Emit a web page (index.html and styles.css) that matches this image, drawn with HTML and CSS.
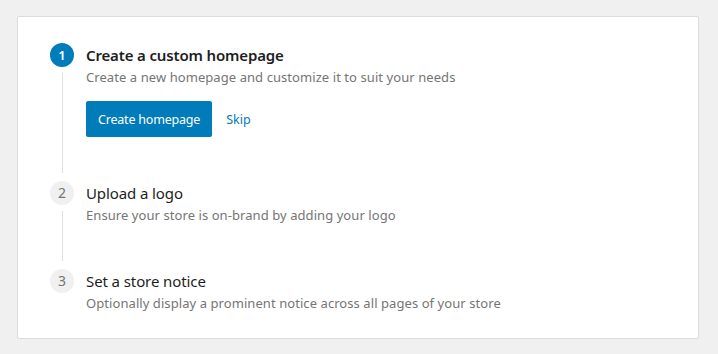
FILE: index.html
```html
<!DOCTYPE html>
<html lang="en">
<head>
  <meta charset="UTF-8">
  <meta name="viewport" content="width=device-width, initial-scale=1.0">
  <title>Store setup</title>
  <link rel="stylesheet" href="styles.css">
</head>
<body>
  <div class="card">
    <div class="step active">
      <div class="marker">
        <span class="num">1</span>
        <span class="line"></span>
      </div>
      <div class="content">
        <h3 class="title">Create a custom homepage</h3>
        <p class="desc">Create a new homepage and customize it to suit your needs</p>
        <div class="actions">
          <button type="button" class="btn">Create homepage</button>
          <a href="#" class="skip">Skip</a>
        </div>
      </div>
    </div>
    <div class="step">
      <div class="marker">
        <span class="num">2</span>
        <span class="line"></span>
      </div>
      <div class="content">
        <h3 class="title">Upload a logo</h3>
        <p class="desc">Ensure your store is on-brand by adding your logo</p>
      </div>
    </div>
    <div class="step last">
      <div class="marker">
        <span class="num">3</span>
      </div>
      <div class="content">
        <h3 class="title">Set a store notice</h3>
        <p class="desc">Optionally display a prominent notice across all pages of your store</p>
      </div>
    </div>
  </div>
</body>
</html>
```

FILE: styles.css
```css
body {
  margin: 0;
  padding: 16px 19px 16px 17px;
  background-color: #f0f0f0;
  font-family: "Noto Sans", "Open Sans", sans-serif;
  color: #1e1e1e;
}
.card {
  background-color: #ffffff;
  border: 1px solid #dcdcde;
  border-radius: 2px;
  padding: 26px 32px 25px 32px;
}
.step {
  display: flex;
  gap: 12px;
}
.marker {
  width: 24px;
  display: flex;
  flex-direction: column;
  align-items: center;
}
.num {
  width: 24px;
  height: 24px;
  border-radius: 50%;
  background-color: #f0f0f0;
  color: #757575;
  font-size: 14px;
  line-height: 24px;
  text-align: center;
  flex-shrink: 0;
}
.active .num {
  background-color: #007cba;
  color: #ffffff;
  font-weight: 600;
  font-size: 13px;
}
.line {
  flex: 1;
  width: 1px;
  background-color: #e0e0e0;
  margin: 6px 0 8px 0;
}
.content {
  padding-bottom: 44px;
}
.last .content {
  padding-bottom: 0;
}
.title {
  margin: 0;
  font-size: 15px;
  font-weight: 400;
  line-height: 24px;
  letter-spacing: -0.1px;
}
.active .title {
  font-weight: 600;
  letter-spacing: -0.15px;
}
.desc {
  margin: 0;
  font-size: 13px;
  line-height: 20px;
  letter-spacing: 0.07px;
  color: #757575;
}
.actions {
  margin-top: 14px;
  display: flex;
  align-items: center;
  gap: 14px;
}
.btn {
  height: 36px;
  padding: 0 12px;
  border: none;
  border-radius: 2px;
  background-color: #007cba;
  color: #ffffff;
  font-family: inherit;
  font-size: 12.5px;
  letter-spacing: -0.2px;
  cursor: pointer;
}
.skip {
  color: #007cba;
  font-size: 12.5px;
  text-decoration: none;
}
```
